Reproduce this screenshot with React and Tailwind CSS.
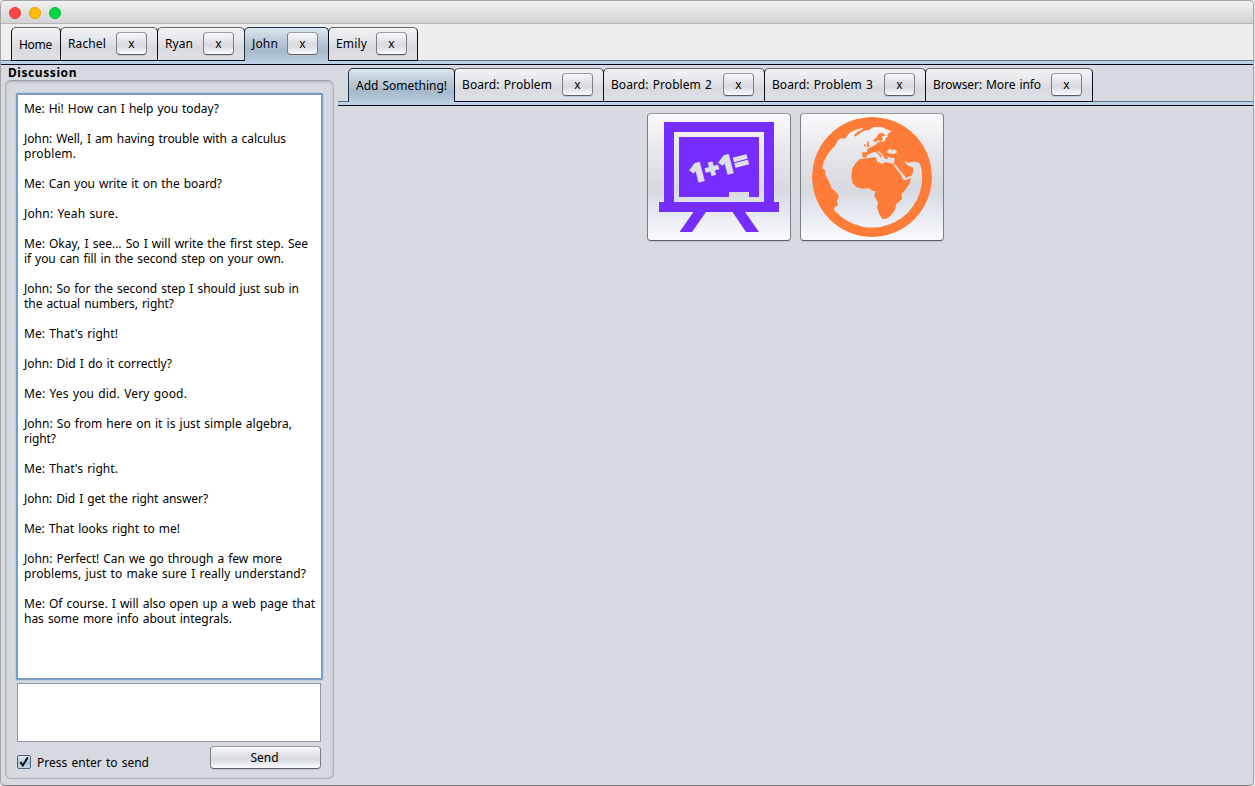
import { useLayoutEffect, useRef, useState } from "react";

const userTabs = [
  { label: "Home", cls: "w-[50px]", textWidth: 33, closable: false },
  { label: "Rachel", cls: "w-[98px]", textWidth: 38, closable: true },
  { label: "Ryan", cls: "w-[88px]", textWidth: 28, closable: true },
  { label: "John", cls: "w-[85px]", textWidth: 26, closable: true, active: true },
  { label: "Emily", cls: "w-[90px]", textWidth: 31, closable: true },
];

const boardTabs = [
  { label: "Add Something!", cls: "w-[107px]", textWidth: 91, closable: false, active: true },
  { label: "Board: Problem", cls: "w-[150px]", textWidth: 90, closable: true },
  { label: "Board: Problem 2", cls: "w-[162px]", textWidth: 101, closable: true },
  { label: "Board: Problem 3", cls: "w-[162px]", textWidth: 101, closable: true },
  { label: "Browser: More info", cls: "w-[168px]", textWidth: 108, closable: true },
];

const messages = [
  [["Me: Hi! How can I help you today?", 195]],
  [["John: Well, I am having trouble with a calculus", 262], ["problem.", 52]],
  [["Me: Can you write it on the board?", 198]],
  [["John: Yeah sure.", 94]],
  [["Me: Okay, I see... So I will write the first step. See", 284], ["if you can fill in the second step on your own.", 260]],
  [["John: So for the second step I should just sub in", 275], ["the actual numbers, right?", 150]],
  [["Me: That's right!", 94]],
  [["John: Did I do it correctly?", 148]],
  [["Me: Yes you did. Very good.", 163]],
  [["John: So from here on it is just simple algebra,", 268], ["right?", 32]],
  [["Me: That's right.", 94]],
  [["John: Did I get the right answer?", 184]],
  [["Me: That looks right to me!", 156]],
  [["John: Perfect! Can we go through a few more", 258], ["problems, just to make sure I really understand?", 282]],
  [["Me: Of course. I will also open up a web page that", 291], ["has some more info about integrals.", 208]],
];

// Spreads the letters so that the text fills the given width.
function Fit({ width, children }) {
  const ref = useRef(null);
  const [spacing, setSpacing] = useState(0);
  useLayoutEffect(() => {
    ref.current.style.letterSpacing = "0px";
    const natural = ref.current.getBoundingClientRect().width;
    const value = (width - natural) / children.length;
    ref.current.style.letterSpacing = `${value}px`;
    setSpacing(value);
  }, [width, children]);
  return (
    <span ref={ref} className="inline-block whitespace-pre [word-spacing:1px]" style={{ letterSpacing: `${spacing}px` }}>
      {children}
    </span>
  );
}

const buttonSkin =
  "rounded-[4px] border border-[#7c7e85] border-t-[#989aa1] border-b-[#5b5d64] bg-[linear-gradient(to_bottom,#fafafb_0%,#e6e7eb_30%,#d7d9df_60%,#e6e8f0_78%,#fbfbff_100%)] shadow-[0_1px_0_#c3c6cd]";

function Tab({ tab }) {
  const skin = tab.active
    ? "border-[#1f2f42] border-b-0 h-[34px] bg-[linear-gradient(to_bottom,#e0e8ee_0%,#c3d0db_30%,#a5b9ca_68%,#b7cce0_100%)]"
    : "border-[#0c0c1c] border-t-[#66676d] h-[34px] bg-[linear-gradient(to_bottom,#f3f3f5_0%,#e1e3e7_45%,#d8dae0_60%,#dfe0e5_100%)]";
  return (
    <div className={`-mr-px flex items-start rounded-t-[5px] border pl-[7px] ${tab.cls} ${skin}`}>
      <div className={tab.closable ? "pt-[8px]" : "pt-[9px]"}>
        <Fit width={tab.textWidth}>{tab.label}</Fit>
      </div>
      {tab.closable && (
        <button className={`mt-[4px] mr-[10px] ml-auto h-[23px] w-[31px] leading-[21px] ${buttonSkin}`}>x</button>
      )}
    </div>
  );
}

function TabStrip({ tabs, edge }) {
  return (
    <div className={`flex h-[38px] items-start border-b border-[#04041a] bg-[linear-gradient(to_bottom,transparent_33px,#5f7388_33px,#5f7388_34px,#bcd0e6_34px)] ${edge}`}>
      {tabs.map((t) => (
        <Tab key={t.label} tab={t} />
      ))}
    </div>
  );
}

function BoardIcon() {
  return (
    <svg width="120" height="110" viewBox="0 0 120 110">
      <mask id="board">
        <rect width="120" height="110" fill="white" />
        <path d="M15 10H105V80H15Z M20 15V75H70V70H90V75H100V15Z" fill="black" fillRule="evenodd" />
      </mask>
      <g fill="#762eff" mask="url(#board)">
        <path d="M5 0H115V80H120V90H99.500L86 90H0V80H5Z" />
        <path d="M34.500 90H47L33 110H20.500Z M73.500 90H86L100 110H87Z" />
      </g>
      <text
        transform="translate(33.500 61.500) rotate(-15)"
        textLength="60"
        lengthAdjust="spacingAndGlyphs"
        fill="#dfe0e5"
        stroke="#dfe0e5"
        strokeWidth="1.2"
        className="font-['Open_Sans',sans-serif] text-[26px] font-extrabold"
      >
        1+1=
      </text>
    </svg>
  );
}

function GlobeIcon() {
  return (
    <svg width="120" height="120" viewBox="51 36 360 360">
      <mask id="globe">
        <circle cx="231" cy="216" r="180" fill="white" />
        {/* Atlantic, Arctic and Indian oceans */}
        <path
          fill="black"
          d="M150 101L163 84L178 76L204 68L201 74L187 80L177 91L180 95L192 86L208 77L222 75L236 66L262 67L274 73L290 79L277 88L279 94L270 101L271 108L258 112L275 131L280 136L300 134L306 141L298 146L299 158L297 178L312 200L330 218L350 212L354 193L350 186L337 181L328 168L341 173L356 170L372 173L378 186A150 150 0 0 1 118 316L118 307L129 301L126 288L132 274L122 260L109 248L103 230L92 212L90 195L82 190L86 170L100 145L120 122L130 104L138 100Z"
        />
        <g fill="white">
          {/* Africa */}
          <path d="M195 162L215 160L239 157L244 159L246 170L262 176L272 171L296 177L304 192L316 207L325 224L332 226L348 219L344 236L328 258L319 268L321 283L304 297L300 315L291 327L279 340L262 342L254 330L246 307L249 292L238 274L241 258L232 258L222 250L202 251L185 247L173 235L169 216L171 193L182 174Z" />
          {/* Europe */}
          <path d="M201 142L217 142L215 134L229 125L243 119L247 112L270 110L290 105L315 116L325 138L306 141L303 134L294 138L288 130L276 139L278 145L301 148L300 159L286 158L275 153L280 162L270 162L264 151L256 143L252 139L247 140L260 151L257 158L250 147L241 140L230 144L217 150L213 158L203 157Z" />
          {/* Scandinavia */}
          <path d="M236 105L247 94L250 86L263 84L272 91L260 95L264 103L257 111L250 104L243 110L236 110Z" />
          {/* Britain and Ireland */}
          <path d="M216 109L222 110L221 117L225 124L216 127L217 117Z M207 119L214 118L212 125L207 124Z" />
          {/* Arabia */}
          <path d="M297 177L303 171L325 169L337 182L353 187L355 202L341 214L333 219L327 210L314 194L301 180Z" />
        </g>
        {/* Black Sea and Red Sea */}
        <path fill="black" d="M278 142L279 136L286 131L291 137L299 133L305 139L304 144L292 143L284 145Z" />
        <path d="M298 179L313 197L331 219" stroke="black" strokeWidth="5" fill="none" />
      </mask>
      <circle cx="231" cy="216" r="180" fill="#ff7c38" mask="url(#globe)" />
    </svg>
  );
}

export default function App() {
  return (
    <div className="h-[786px] w-[1255px] overflow-hidden bg-[#e4e4e4] font-['Noto_Sans','Open_Sans',sans-serif] text-[12px] leading-[15px] text-black">
      <div className="flex h-[786px] w-[1254px] flex-col overflow-hidden rounded-[5px] border border-[#a5a5a8] border-b-[#77797f] bg-[#d6d9e0]">
        <header className="flex h-[23px] shrink-0 items-center gap-[8px] border-b border-[#b5b5b5] bg-[linear-gradient(to_bottom,#f0f0f0,#d3d3d3)] pt-px pl-[8px]">
          <span className="size-[12px] rounded-full border border-[#e2383d] bg-[#ff4448]" />
          <span className="size-[12px] rounded-full border border-[#e2a200] bg-[#ffbd00]" />
          <span className="size-[12px] rounded-full border border-[#00b93a] bg-[#00d742]" />
        </header>

        <div className="shrink-0 bg-[#eeeeee] pt-[3px]">
          <TabStrip tabs={userTabs} edge="pl-[10px]" />
        </div>

        <main className="flex min-h-0 flex-1">
          <section className="flex w-[337px] shrink-0 flex-col pl-[4px]">
            <h2 className="h-[15px] pl-[3px] font-bold">
              <Fit width={69}>Discussion</Fit>
            </h2>
            <div className="flex h-[699px] w-[329px] flex-col rounded-[6px] border border-[#b0b2b8] border-t-[#9c9ea3] pt-[12px] pl-[10px] shadow-[inset_0_1px_3px_#b4b6bc]">
              <div className="h-[587px] w-[307px] shrink-0 rounded-[1px] border border-[#73a4d1] bg-[#8d93a2] p-px shadow-[0_0_0_0.500px_#a9c4df]">
                <div className="h-full bg-white pt-[6px] pl-[6px]">
                  {messages.map((lines, i) => (
                    <div key={i} className="mb-[15px]">
                      {lines.map(([text, width]) => (
                        <div key={text} className="h-[15px]">
                          <Fit width={width}>{text}</Fit>
                        </div>
                      ))}
                    </div>
                  ))}
                </div>
              </div>
              <div className="mt-[3px] ml-px h-[59px] w-[304px] shrink-0 border border-[#9296a0] bg-white" />
              <div className="flex w-[305px] items-start pt-[4px] pl-px">
                <span className="mt-[9px] flex size-[14px] items-center justify-center rounded-[2px] border border-[#49627b] bg-[linear-gradient(to_bottom,#e3ebf2,#a9bfd2_60%,#c9dcec)]">
                  <svg width="12" height="12" viewBox="0 0 12 12" className="shrink-0">
                    <path d="M2.500 6L4.800 9.600L9.800 1.200" fill="none" stroke="black" strokeWidth="1.800" />
                  </svg>
                </span>
                <span className="mt-[9px] ml-[6px]">
                  <Fit width={112}>Press enter to send</Fit>
                </span>
                <button className={`ml-auto h-[23px] w-[111px] pr-[2px] leading-[21px] ${buttonSkin}`}>
                  <Fit width={28}>Send</Fit>
                </button>
              </div>
            </div>
          </section>

          <section className="min-w-0 flex-1 pt-[3px]">
            <TabStrip tabs={boardTabs} edge="pl-[10px]" />
            <div className="flex justify-center gap-[9px] pt-[7px]">
              <button className={`flex h-[128px] w-[144px] items-center justify-center ${buttonSkin}`}>
                <BoardIcon />
              </button>
              <button className={`flex h-[128px] w-[144px] items-center justify-center ${buttonSkin}`}>
                <GlobeIcon />
              </button>
            </div>
          </section>
        </main>
      </div>
    </div>
  );
}
